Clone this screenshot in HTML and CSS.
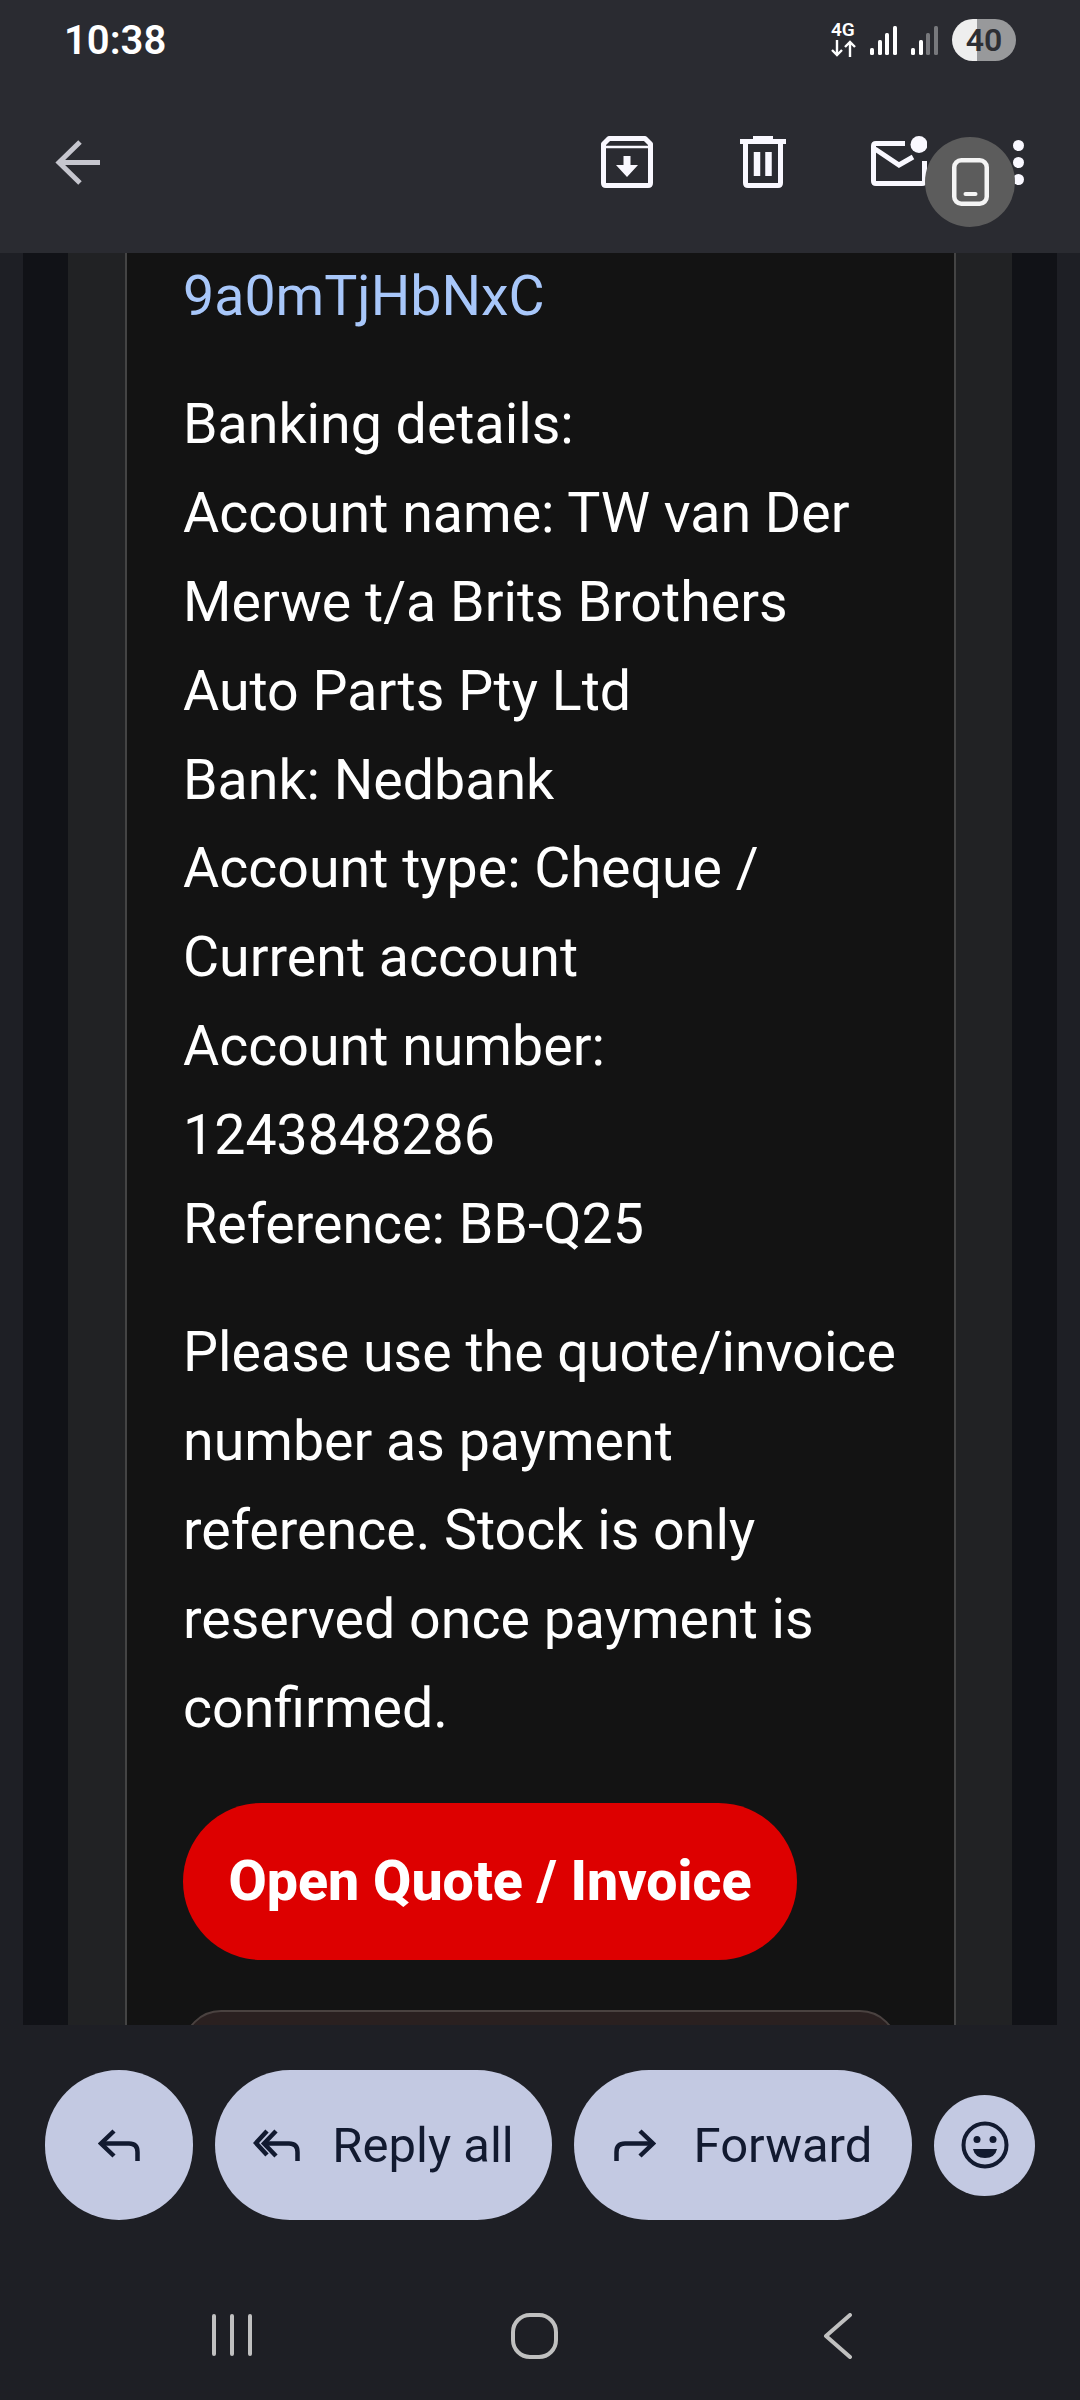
FILE: index.html

```html
<!DOCTYPE html>
<html lang="en">
<head>
    <meta charset="UTF-8">
    <meta name="viewport" content="width=device-width, initial-scale=1.0">
    <title>Quote email</title>
    <link rel="stylesheet" href="styles.css">
</head>
<body>
    <header class="topBar">
        <div class="statusBar">
            <span class="clock">10:38</span>
            <div class="statusIcons">
                <div class="netType">
                    <span>4G</span>
                    <svg width="25" height="17" viewBox="0 0 25 17" fill="none" stroke="#fff" stroke-width="2.4">
                        <path d="M6 0V15M1 10l5 5 5-5"/>
                        <path d="M19 17V2M14 7l5-5 5 5"/>
                    </svg>
                </div>
                <svg class="signal" width="27" height="30" viewBox="0 0 27 30" fill="#fff">
                    <rect x="0" y="23" width="4" height="7" rx="1.5"/>
                    <rect x="8" y="15" width="4" height="15" rx="1.5"/>
                    <rect x="15" y="8" width="4" height="22" rx="1.5"/>
                    <rect x="23" y="1" width="4" height="29" rx="1.5"/>
                </svg>
                <svg class="signal" width="27" height="30" viewBox="0 0 27 30" fill="#fff">
                    <rect x="0" y="23" width="4" height="7" rx="1.5"/>
                    <rect x="8" y="15" width="4" height="15" rx="1.5"/>
                    <rect x="15" y="8" width="4" height="22" rx="1.5" fill="#77787c"/>
                    <rect x="23" y="1" width="4" height="29" rx="1.5" fill="#77787c"/>
                </svg>
                <span class="battery">40</span>
            </div>
        </div>
        <div class="toolBar">
            <div class="backBox">
                <svg width="45" height="45" viewBox="0 0 45 45" fill="none" stroke="#c6c6ce" stroke-width="5">
                    <path d="M45 22.5H4M25 2L4 22.5 25 43"/>
                </svg>
            </div>
            <div class="toolBox">
                <svg width="52" height="52" viewBox="0 0 52 52" fill="none" stroke="#f9f8ff" stroke-width="5">
                    <path d="M8 2.5H44L49.5 8V47Q49.5 49.5 47 49.5H5Q2.5 49.5 2.5 47V8Z" stroke-linejoin="round"/>
                    <path d="M3 11H49" stroke-width="2.5"/>
                    <path d="M22.5 20H29.5V29H37L26 41 15 29H22.5Z" fill="#f9f8ff" stroke="none"/>
                </svg>
            </div>
            <div class="toolBox">
                <svg width="46" height="52" viewBox="0 0 46 52" fill="none" stroke="#f9f8ff" stroke-width="5">
                    <path d="M0 5.5H46"/>
                    <path d="M13 1.5H33" stroke-width="3"/>
                    <path d="M5.5 6V47Q5.5 49.5 8 49.5H38Q40.5 49.5 40.5 47V6"/>
                    <path d="M17 16V40M28.5 16V40" stroke-width="6.5"/>
                </svg>
            </div>
            <div class="toolBox">
                <svg width="56" height="52" viewBox="0 0 56 52" fill="none" stroke="#f9f8ff" stroke-width="5">
                    <path d="M34 7.5H5Q2.5 7.5 2.5 10V45Q2.5 47.5 5 47.5H51Q53.5 47.5 53.5 45V25"/>
                    <path d="M4 13L28 29 42 21"/>
                    <circle cx="48" cy="8.5" r="8.5" fill="#f9f8ff" stroke="none"/>
                </svg>
            </div>
            <div class="moreBox">
                <i class="dot"></i>
                <i class="dot"></i>
                <i class="dot"></i>
            </div>
        </div>
        <div class="floatCircle">
            <svg width="37" height="48" viewBox="0 0 37 48" fill="none" stroke="#f4f4f4" stroke-width="4.5">
                <rect x="2.25" y="2.25" width="32.5" height="43.5" rx="7"/>
                <path d="M13.5 36H23.5" stroke-width="4" stroke-linecap="round"/>
            </svg>
        </div>
    </header>

    <main class="mailArea">
        <div class="stripDark">
            <div class="stripGrey">
                <div class="mailCard">
                    <p class="para"><a class="mailLink">9a0mTjHbNxC</a></p>
                    <p class="para">Banking details:<br>
                        Account name: TW van Der Merwe t/a Brits Brothers Auto Parts Pty Ltd<br>
                        Bank: Nedbank<br>
                        Account type: Cheque / Current account<br>
                        Account number: 1243848286<br>
                        Reference: BB-Q25</p>
                    <p class="para">Please use the quote/invoice number as payment reference. Stock is only reserved once payment is confirmed.</p>
                    <a class="openButton">Open Quote / Invoice</a>
                    <div class="nextBox"></div>
                </div>
            </div>
        </div>
    </main>

    <footer class="bottomBar">
        <div class="actions">
            <div class="action actionRound">
                <svg width="42" height="32" viewBox="0 0 42 32" fill="none" stroke="#121a30" stroke-width="4.5">
                    <path d="M16 2L3 14.5 16 27"/>
                    <path d="M3 14.5H31Q39.5 14.5 39.5 23V32"/>
                </svg>
            </div>
            <div class="action actionAll">
                <svg width="47" height="32" viewBox="0 0 47 32" fill="none" stroke="#121a30" stroke-width="4.5">
                    <path d="M14 2L3 14 14 26"/>
                    <path d="M23 2L11 14.5 23 27"/>
                    <path d="M11 14.5H36Q44.5 14.5 44.5 23V32"/>
                </svg>
                <span>Reply all</span>
            </div>
            <div class="action actionForward">
                <svg width="42" height="32" viewBox="0 0 42 32" fill="none" stroke="#121a30" stroke-width="4.5">
                    <path d="M26 2L39 14.5 26 27"/>
                    <path d="M39 14.5H11Q2.5 14.5 2.5 23V32"/>
                </svg>
                <span>Forward</span>
            </div>
            <div class="action actionEmoji">
                <svg width="48" height="48" viewBox="0 0 48 48" fill="none" stroke="#121a30" stroke-width="4">
                    <circle cx="24" cy="24" r="21.5"/>
                    <circle cx="16" cy="18.5" r="3.5" fill="#121a30" stroke="none"/>
                    <circle cx="32" cy="18.5" r="3.5" fill="#121a30" stroke="none"/>
                    <path d="M12 28H36Q34 37 24 37 14 37 12 28Z" fill="#121a30" stroke="none"/>
                </svg>
            </div>
        </div>
        <nav class="navBar">
            <div class="navItem">
                <svg width="42" height="44" viewBox="0 0 42 44" fill="none" stroke="#c0c0c0" stroke-width="4" stroke-linecap="round">
                    <path d="M3 3V41M21 3V41M39 3V41"/>
                </svg>
            </div>
            <div class="navItem">
                <svg width="47" height="46" viewBox="0 0 47 46" fill="none" stroke="#c0c0c0" stroke-width="4">
                    <rect x="2" y="2" width="43" height="42" rx="17"/>
                </svg>
            </div>
            <div class="navItem">
                <svg width="30" height="46" viewBox="0 0 30 46" fill="none" stroke="#c0c0c0" stroke-width="4" stroke-linecap="round" stroke-linejoin="round">
                    <path d="M27 2L3 23 27 44"/>
                </svg>
            </div>
        </nav>
    </footer>
</body>
</html>
```

FILE: styles.css

```css
html, body {
    margin: 0;
    padding: 0;
}
body {
    width: 1080px;
    height: 2400px;
    overflow: hidden;
    display: flex;
    flex-direction: column;
    font-family: Roboto, sans-serif;
    background-color: #1e1f25;
}
.topBar {
    position: relative;
    height: 253px;
    flex: none;
    background-color: #2a2b31;
}
.statusBar {
    height: 80px;
    display: flex;
    align-items: center;
    justify-content: space-between;
    padding: 0 64px 0 64px;
}
.clock {
    color: #fff;
    font-size: 40px;
    font-weight: 600;
}
.statusIcons {
    display: flex;
    align-items: flex-end;
    height: 42px;
}
.netType {
    width: 25px;
    margin-right: 14px;
    margin-bottom: 4px;
    display: flex;
    flex-direction: column;
    color: #fff;
    font-size: 19px;
    font-weight: 600;
    line-height: 15px;
}
.netType svg {
    display: block;
    margin-top: 3px;
}
.signal {
    margin-right: 14px;
    margin-bottom: 6px;
}
.battery {
    width: 64px;
    height: 42px;
    border-radius: 21px;
    background: linear-gradient(to right, #eeeeee 25px, #98999b 25px);
    color: #2d2e33;
    font-size: 32px;
    font-weight: 600;
    line-height: 42px;
    text-align: center;
}
.toolBar {
    height: 164px;
    display: flex;
    align-items: center;
    padding-right: 11px;
}
.backBox {
    width: 55px;
    flex: none;
    margin-left: 55px;
    margin-right: auto;
    display: flex;
}
.toolBox {
    width: 136px;
    display: flex;
    justify-content: center;
}
.moreBox {
    width: 102px;
    display: flex;
    flex-direction: column;
    align-items: center;
    gap: 6px;
}
.dot {
    width: 11px;
    height: 11px;
    border-radius: 50%;
    background-color: #f9f8ff;
}
.floatCircle {
    position: absolute;
    left: 925px;
    top: 137px;
    width: 90px;
    height: 90px;
    border-radius: 50%;
    background-color: #5c5c5c;
    display: flex;
    align-items: center;
    justify-content: center;
}
.mailArea {
    height: 1772px;
    flex: none;
    overflow: hidden;
    padding: 0 23px;
}
.stripDark {
    height: 100%;
    padding: 0 45px;
    background-color: #111217;
}
.stripGrey {
    height: 100%;
    padding: 0 56px 0 57px;
    background-color: #212224;
}
.mailCard {
    height: 100%;
    box-sizing: border-box;
    padding: 0 56px;
    border-left: 2px solid #444444;
    border-right: 2px solid #444444;
    background-color: #131313;
}
.para {
    margin: 0 0 39px;
    color: #fff;
    font-size: 55.5px;
    line-height: 88.9px;
}
.mailLink {
    color: #a8c7fa;
}
.openButton {
    display: block;
    width: 614px;
    height: 157px;
    margin-top: 49px;
    border-radius: 79px;
    background-color: #dd0000;
    color: #fff;
    font-size: 55.5px;
    font-weight: 800;
    line-height: 157px;
    text-align: center;
}
.nextBox {
    height: 120px;
    margin-top: 50px;
    box-sizing: border-box;
    border: 2px solid #4a4240;
    border-radius: 38px;
    background-color: #2a2020;
}
.bottomBar {
    flex: 1;
    background-color: #1e1f25;
}
.actions {
    display: flex;
    align-items: center;
    gap: 22px;
    padding: 45px 45px 0;
}
.action {
    height: 150px;
    box-sizing: border-box;
    display: flex;
    align-items: center;
    justify-content: center;
    border-radius: 75px;
    background-color: #c3c9e2;
    color: #121a30;
    font-size: 49px;
}
.actionRound {
    width: 148px;
}
.actionAll {
    width: 337px;
    gap: 32px;
}
.actionForward {
    width: 338px;
    gap: 38px;
}
.actionEmoji {
    width: 101px;
    height: 101px;
    border-radius: 50%;
}
.navBar {
    display: grid;
    grid-template-columns: repeat(3, 303px);
    padding: 93px 0 0 80px;
}
.navItem {
    display: flex;
    justify-content: center;
}
```
